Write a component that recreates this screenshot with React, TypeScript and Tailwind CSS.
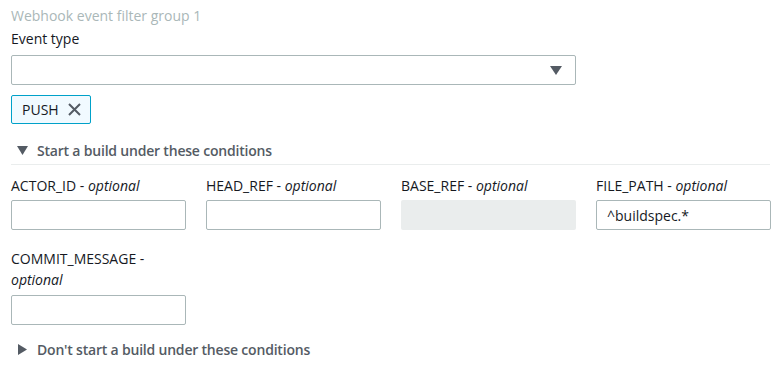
import React from "react";

function Field({ name, disabled, value }: { name: string; disabled?: boolean; value?: string }) {
  return (
    <div className="flex flex-col w-[175px]">
      <div className="h-[26px] flex items-start pt-[2px] text-[14px] leading-[20px] text-[#16191f]">
        <span>
          {name} - <i>optional</i>
        </span>
      </div>
      <div
        className={
          disabled
            ? "h-[30px] rounded-[2px] bg-[#eaeded]"
            : "h-[30px] rounded-[2px] border border-[#aab7b8] bg-white px-[10px] flex items-center text-[14px] text-[#16191f]"
        }
      >
        {value}
      </div>
    </div>
  );
}

export default function App() {
  return (
    <div
      className="w-[782px] h-[374px] bg-white px-[11px] pt-[5px] text-[#16191f]"
      style={{ fontFamily: '"Open Sans", "Noto Sans", sans-serif' }}
    >
      <div className="text-[14px] leading-[22px] text-[#aab7b8]">Webhook event filter group 1</div>
      <div className="mt-[1px] text-[14px] leading-[22px] text-[#16191f]">Event type</div>
      <div className="mt-[5px] w-[565px] h-[30px] rounded-[2px] border border-[#aab7b8] flex items-center justify-end pr-[13px]">
        <svg width="12" height="9" viewBox="0 0 12 9">
          <path d="M0 0 H12 L6 9 Z" fill="#545b64" />
        </svg>
      </div>
      <div className="mt-[10px] w-[80px] h-[29px] border border-[#00a1c9] bg-[#f1faff] rounded-[2px] flex items-center pl-[10px] gap-[9px] text-[14px]">
        <span>PUSH</span>
        <svg width="13" height="13" viewBox="0 0 13 13">
          <path d="M1 1 L12 12 M12 1 L1 12" stroke="#545b64" strokeWidth="2" />
        </svg>
      </div>
      <div className="mt-[15px] flex items-center h-[22px] pl-[6px] gap-[9px] text-[14px] font-semibold tracking-[-0.2px] text-[#545b64]">
        <svg width="11" height="9" viewBox="0 0 11 9">
          <path d="M0 0 H11 L5.5 9 Z" fill="#545b64" />
        </svg>
        <span>Start a build under these conditions</span>
      </div>
      <div className="mt-[3px] w-[759px] h-px bg-[#eaeded]" />
      <div className="mt-[9px] flex gap-[20px]">
        <Field name="ACTOR_ID" />
        <Field name="HEAD_REF" />
        <Field name="BASE_REF" disabled />
        <Field name="FILE_PATH" value="^buildspec.*" />
      </div>
      <div className="mt-[18px] flex flex-col w-[175px]">
        <div className="text-[14px] leading-[21px] text-[#16191f]">
          COMMIT_MESSAGE -<br />
          <i>optional</i>
        </div>
        <div className="mt-[5px] h-[30px] rounded-[2px] border border-[#aab7b8] bg-white" />
      </div>
      <div className="mt-[13px] flex items-center h-[22px] pl-[7px] gap-[10px] text-[14px] font-semibold tracking-[-0.2px] text-[#545b64]">
        <svg width="9" height="11" viewBox="0 0 9 11">
          <path d="M0 0 V11 L9 5.5 Z" fill="#545b64" />
        </svg>
        <span>Don't start a build under these conditions</span>
      </div>
    </div>
  );
}
